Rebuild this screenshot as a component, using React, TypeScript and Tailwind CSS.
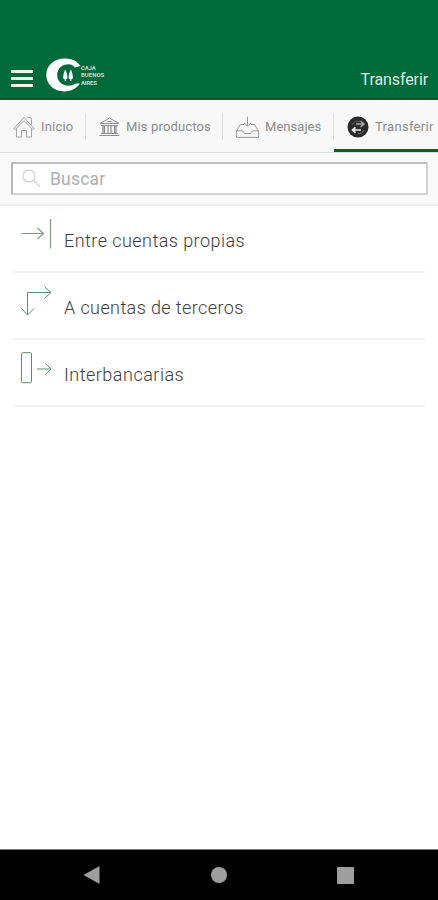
import React from "react";

interface Tab {
  label: string;
  icon: React.ReactNode;
  tabClass: string;
  labelClass: string;
  active?: boolean;
}

interface TransferOption {
  label: string;
  icon: React.ReactNode;
  labelClass: string;
}

const HomeIcon = () => (
  <svg width="22" height="22" viewBox="0 0 22 22" fill="none" stroke="#999" strokeWidth="0.9">
    <path d="M.8 12.500 11 1.500l10.200 11-1.500 1L11 4.500l-8.700 9z" />
    <path d="M3.500 12.500v8.500h5v-6.500h5v6.500h5v-8.500" />
    <path d="M14 2.500c1.500-2 4.500-1 4.500 1.500v4.500" />
  </svg>
);

const BankIcon = () => (
  <svg width="21" height="19" viewBox="0 0 21 19" fill="none" stroke="#8e8e8e" strokeWidth="1">
    <path d="M1 6.500 10.500 1 20 6.500z" />
    <path d="M8.500 4.500h4M2 8.500h17M2 16.500h17M.5 18.500h20" />
    <path d="M4 9v7M5.500 9v7M9 9v7M12 9v7M15.500 9v7M17 9v7" strokeWidth="1.200" />
  </svg>
);

const InboxIcon = () => (
  <svg width="23" height="22" viewBox="0 0 23 22" fill="none" stroke="#8e8e8e" strokeWidth="0.9">
    <path d="M11.500.5v9.500M8 6.800l3.500 3.400L15 6.800" />
    <path d="M8 8.500H4.500L.6 15v6.400h21.800V15l-3.900-6.500H15" />
    <path d="M.6 14.800h5.900l2 2.700h6l2-2.700h5.900" />
  </svg>
);

const TransferIcon = () => (
  <svg width="22" height="22" viewBox="0 0 22 22" fill="none">
    <circle cx="11" cy="11" r="10.500" fill="#2b2b2b" />
    <path d="M5.500 9c1-3 4-4.500 8-3.500" stroke="#666" strokeWidth="1" />
    <path d="M9 8h7M13.500 5l3.500 3-3.500 3" stroke="#a8a8a8" strokeWidth="1.500" />
    <path d="M14 14H6M8.500 11.300 5.500 14l3 2.700" stroke="#ededed" strokeWidth="1.700" />
    <path d="M11 17.500c3 .3 5-1 6-3.500" stroke="#777" strokeWidth="1" />
  </svg>
);

const ToLineIcon = () => (
  <svg width="34" height="32" viewBox="0 0 34 32" fill="none" stroke="#83998a" strokeWidth="1.200">
    <path d="M1.500 15.500h22M17.500 10l6 5.500-6 5.500M30.500 1v29.500" />
  </svg>
);

const CornerIcon = () => (
  <svg width="34" height="32" viewBox="0 0 34 32" fill="none" stroke="#5e8c71" strokeWidth="1">
    <path d="M7.500 30V7.500h23M24.500 1.500l6.500 6-6.500 6M1.500 23.500l6 6.500 6.500-6.500" />
  </svg>
);

const OutIcon = () => (
  <svg width="34" height="32" viewBox="0 0 34 32" fill="none" stroke="#5e8c71" strokeWidth="1">
    <rect x="1.500" y=".7" width="10" height="30" rx="1" />
    <path d="M17 17h14M25.500 11.500l5.500 5.500-5.500 5.500" />
  </svg>
);

const Logo = () => (
  <div className="ml-[13px] flex items-center">
    <svg width="36" height="34" viewBox="0 0 36 34">
      <path
        fill="#fff"
        d="M34.500 8C31 3 25.500.6 18.500.6 8 .6.3 7.500.3 17S8 33.400 18.500 33.400c6.500 0 12-2.900 15.500-7.900h-4.500c-2 1.600-4.500 2.200-7 2.200-6.700 0-11.300-4.700-11.300-10.700S15.800 6.300 22.500 6.300c2.500 0 4.700 1 6.300 3.200z"
      />
      <path
        fill="#fff"
        d="M19.300 11.500c-1.500 3-2.100 5.500-2.100 8 0 1 .6 1.600 1.500 1.600V23h1.200v-1.900c.9 0 1.500-.6 1.500-1.600 0-2.500-.6-5-2.100-8zM24.800 11.500c-1.500 3-2.100 5.500-2.100 8 0 1 .6 1.600 1.500 1.600V23h1.200v-1.900c.9 0 1.500-.6 1.500-1.600 0-2.500-.6-5-2.100-8z"
      />
    </svg>
    <div className="-ml-px flex flex-col text-[6px] leading-[7.300px] font-bold text-[#c4ddcf]">
      <span className="tracking-[-0.2px]">CAJA</span>
      <span>BUENOS</span>
      <span className="tracking-[-0.2px]">AIRES</span>
    </div>
  </div>
);

const tabs: Tab[] = [
  { label: "Inicio", icon: <HomeIcon />, tabClass: "w-[86px] pl-[13px] gap-[6px]", labelClass: "tracking-[0.2px]" },
  { label: "Mis productos", icon: <BankIcon />, tabClass: "w-[137px] pl-[13px] gap-[6px]", labelClass: "tracking-[0.15px]" },
  { label: "Mensajes", icon: <InboxIcon />, tabClass: "w-[111px] pl-[13px] gap-[6px]", labelClass: "tracking-[0.05px]" },
  { label: "Transferir", icon: <TransferIcon />, tabClass: "w-[104px] pl-[13px] gap-[6px]", labelClass: "tracking-[0.3px]", active: true },
];

const options: TransferOption[] = [
  { label: "Entre cuentas propias", icon: <ToLineIcon />, labelClass: "tracking-[0.45px]" },
  { label: "A cuentas de terceros", icon: <CornerIcon />, labelClass: "tracking-[0.4px]" },
  { label: "Interbancarias", icon: <OutIcon />, labelClass: "tracking-[0.5px]" },
];

const App: React.FC = () => {
  return (
    <div className="flex h-[900px] w-[438px] flex-col overflow-hidden bg-white font-[Roboto,sans-serif]">
      {/* Header, includes the status bar area */}
      <header className="flex h-[100px] shrink-0 items-start border-b-2 border-[#075b20] bg-[#006b3a] pt-[58px] pr-[10px] pl-[11px]">
        <button className="mt-[12px] flex flex-col gap-[4px]" aria-label="Menu">
          <span className="h-[3px] w-[22px] bg-[#eef7e8]" />
          <span className="h-[3px] w-[22px] bg-[#eef7e8]" />
          <span className="h-[3px] w-[22px] bg-[#eef7e8]" />
        </button>
        <Logo />
        <h1 className="mt-[10px] ml-auto text-[16px] leading-6 tracking-[-0.1px] text-[#dcebe1]">
          Transferir
        </h1>
      </header>

      {/* Tabs */}
      <nav className="flex h-[53px] shrink-0 border-b border-[#dedede] bg-[#f8f8f8]">
        {tabs.map((tab, i) => (
          <div
            key={tab.label}
            className={`flex h-[52px] shrink-0 flex-col ${tab.active ? "border-b-[3px] border-[#145c24]" : ""}`}
          >
            <div className={`mt-[13px] flex h-[27px] items-center ${tab.tabClass} ${i < 3 ? "border-r border-[#dcdcdc]" : ""}`}>
              <span className="shrink-0">{tab.icon}</span>
              <span className={`mt-px text-[13px] leading-5 whitespace-nowrap text-[#8c8c8c] ${tab.labelClass}`}>
                {tab.label}
              </span>
            </div>
          </div>
        ))}
      </nav>

      {/* Search */}
      <div className="h-[53px] shrink-0 border-b-2 border-[#f0f0f0] bg-[#f9f9f9] pt-[9px] pr-[10px] pl-[11px]">
        <div className="flex h-[33px] items-center border-2 border-[#d2d2d2] border-t-[#bdbdbd] border-l-[#b5b8b8] bg-white pl-[9px]">
          <svg width="19" height="19" viewBox="0 0 19 19" fill="none" stroke="#cdcdcd" strokeWidth="1.100">
            <circle cx="7" cy="7" r="6" />
            <path d="m11.500 11.500 6.500 6" />
          </svg>
          <span className="mt-0.5 ml-[9px] text-[17.500px] tracking-[0.2px] text-[#abb0b3]">Buscar</span>
        </div>
      </div>

      {/* Transfer options */}
      <main className="flex-1 pr-[13px] pl-[13px]">
        {options.map((option) => (
          <div
            key={option.label}
            className="flex h-[67px] items-start border-b-2 border-[#f2f2f2] pt-[12px] pl-[7px]"
          >
            {option.icon}
            <span className={`mt-[11px] ml-[10px] text-[18px] leading-6 font-light text-[#3c3c3c] ${option.labelClass}`}>
              {option.label}
            </span>
          </div>
        ))}
      </main>

      {/* Android navigation */}
      <footer className="flex h-[51px] shrink-0 items-center justify-between border-t border-[#777] bg-black pr-[84px] pl-[83px]">
        <svg width="17" height="20" viewBox="0 0 17 20" fill="#9e9e9e">
          <path d="M.5 10 16.500 1v18z" />
        </svg>
        <span className="h-4 w-4 rounded-full bg-[#9e9e9e]" />
        <span className="h-[17px] w-[17px] rounded-[1px] bg-[#9e9e9e]" />
      </footer>
    </div>
  );
};

export default App;
